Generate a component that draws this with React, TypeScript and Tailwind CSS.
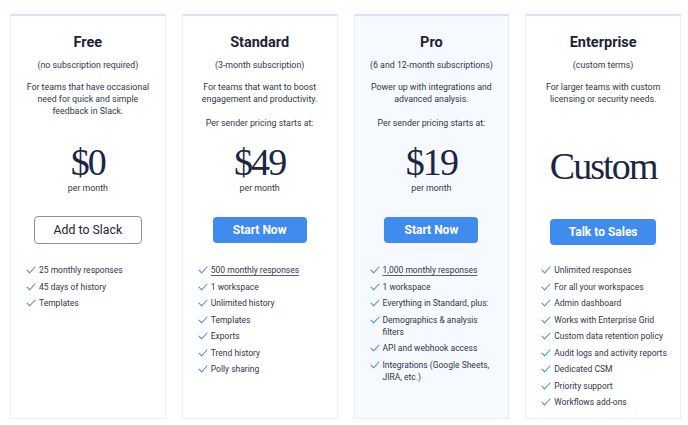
import React from 'react'

type Feature = { lines: string[]; underline?: boolean }

type Plan = {
  name: string
  term: string
  desc: string[]
  perSender?: boolean
  price: string
  perMonth: boolean
  button: string
  outlined?: boolean
  highlight?: boolean
  features: Feature[]
}

const f = (text: string, underline = false): Feature => ({ lines: [text], underline })

const PLANS: Plan[] = [
  {
    name: 'Free',
    term: '(no subscription required)',
    desc: ['For teams that have occasional', 'need for quick and simple', 'feedback in Slack.'],
    price: '$0',
    perMonth: true,
    button: 'Add to Slack',
    outlined: true,
    features: [f('25 monthly responses'), f('45 days of history'), f('Templates')],
  },
  {
    name: 'Standard',
    term: '(3-month subscription)',
    desc: ['For teams that want to boost', 'engagement and productivity.'],
    perSender: true,
    price: '$49',
    perMonth: true,
    button: 'Start Now',
    features: [
      f('500 monthly responses', true),
      f('1 workspace'),
      f('Unlimited history'),
      f('Templates'),
      f('Exports'),
      f('Trend history'),
      f('Polly sharing'),
    ],
  },
  {
    name: 'Pro',
    term: '(6 and 12-month subscriptions)',
    desc: ['Power up with integrations and', 'advanced analysis.'],
    perSender: true,
    price: '$19',
    perMonth: true,
    button: 'Start Now',
    highlight: true,
    features: [
      f('1,000 monthly responses', true),
      f('1 workspace'),
      f('Everything in Standard, plus:'),
      { lines: ['Demographics & analysis', 'filters'] },
      f('API and webhook access'),
      { lines: ['Integrations (Google Sheets,', 'JIRA, etc.)'] },
    ],
  },
  {
    name: 'Enterprise',
    term: '(custom terms)',
    desc: ['For larger teams with custom', 'licensing or security needs.'],
    price: 'Custom',
    perMonth: false,
    button: 'Talk to Sales',
    features: [
      f('Unlimited responses'),
      f('For all your workspaces'),
      f('Admin dashboard'),
      f('Works with Enterprise Grid'),
      f('Custom data retention policy'),
      f('Audit logs and activity reports'),
      f('Dedicated CSM'),
      f('Priority support'),
      f('Workflows add-ons'),
    ],
  },
]

function Check() {
  return (
    <svg width="10" height="8" viewBox="0 0 10 8" className="mt-[2px] shrink-0" fill="none">
      <path d="M1 4.2 L3.6 6.8 L9 1" stroke="#4a8fe7" strokeWidth="1.1" strokeLinecap="round" strokeLinejoin="round" />
    </svg>
  )
}

function PlanCard({ plan }: { plan: Plan }) {
  return (
    <div
      className={`flex flex-col items-center border border-[#eceef2] border-t-2 border-t-[#d3e4fa] pt-[17px] ${
        plan.highlight ? 'bg-[#f6f9fe]' : 'bg-white'
      }`}
    >
      <h3 className="text-[14.5px] leading-[20px] font-bold text-[#1b2437]">{plan.name}</h3>
      <p className="mt-[6px] text-[8.8px] leading-[12px] text-[#2f3749]">{plan.term}</p>

      {/* description + per sender note */}
      <div className="mt-[10px] h-[62px] text-center text-[8.8px] leading-[12px] text-[#2f3749]">
        {plan.desc.map((line) => (
          <div key={line}>{line}</div>
        ))}
        {plan.perSender && <div className="mt-[12px]">Per sender pricing starts at:</div>}
      </div>

      {/* price */}
      <div className="h-[72px] flex flex-col items-center">
        <span
          className={`text-[#1c2541] tracking-[-0.05em] text-[38px] ${
            plan.perMonth ? 'leading-[38px]' : 'leading-[40px] mt-[3px]'
          }`}
          style={{ fontFamily: '"Liberation Serif", "DejaVu Serif", serif' }}
        >
          {plan.price}
        </span>
        {plan.perMonth && (
          <span className="mt-[1px] text-[8.8px] leading-[12px] text-[#2f3749]">per month</span>
        )}
      </div>

      {/* button */}
      <div className="h-[30px] flex items-center">
        {plan.outlined ? (
          <button className="w-[108px] h-[28px] rounded-[4px] border border-[#8b909c] bg-white text-[12.3px] text-[#1b2437]">
            {plan.button}
          </button>
        ) : (
          <button
            className={`h-[26px] rounded-[4px] bg-[#3f8cee] text-[12px] font-bold text-white ${
              plan.name === 'Enterprise' ? 'w-[106px] mt-[3px]' : 'w-[94px]'
            }`}
          >
            {plan.button}
          </button>
        )}
      </div>

      {/* features */}
      <ul className="mt-[19px] self-stretch pl-[15px] flex flex-col gap-[4.5px]">
        {plan.features.map((item) => (
          <li
            key={item.lines[0]}
            className="flex items-start gap-[3px] whitespace-nowrap text-[8.5px] leading-[12px] text-[#2f3749]"
          >
            <Check />
            <span className={item.underline ? 'underline underline-offset-2 decoration-[#5a6170]' : ''}>
              {item.lines.map((l) => (
                <div key={l}>{l}</div>
              ))}
            </span>
          </li>
        ))}
      </ul>
    </div>
  )
}

export default function App() {
  return (
    <div
      className="w-[688px] h-[425px] bg-white pt-[14px] pl-[10px] pr-[7px]"
      style={{ fontFamily: 'Roboto, "Noto Sans", sans-serif' }}
    >
      <div className="grid grid-cols-4 gap-[16px] h-[405px]">
        {PLANS.map((p) => (
          <PlanCard key={p.name} plan={p} />
        ))}
      </div>
    </div>
  )
}
